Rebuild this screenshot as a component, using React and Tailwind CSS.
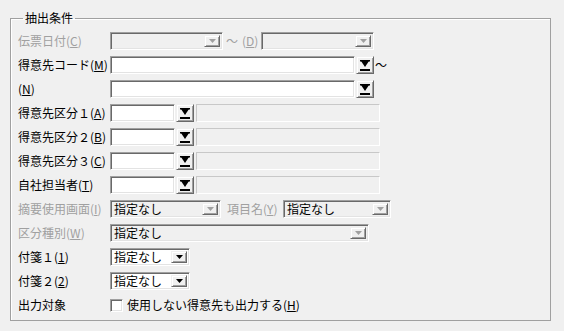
import React from 'react';

const sunken =
    'border border-t-[#a0a0a0] border-l-[#a0a0a0] border-r-white border-b-white shadow-[inset_1px_1px_0_#696969,inset_-1px_-1px_0_#e3e3e3]';
const raised =
    'border border-t-[#f0f0f0] border-l-[#f0f0f0] border-r-[#696969] border-b-[#696969] shadow-[inset_1px_1px_0_#ffffff,inset_-1px_-1px_0_#a0a0a0]';

const Mn = ({ text, k }) => (
    <>
        {text}(<u>{k}</u>)
    </>
);

const Row = ({ label, disabled, children }) => (
    <div className="flex h-[24px] items-center">
        <div className={`w-[92px] shrink-0 whitespace-nowrap ${disabled ? 'text-[#a0a0a0]' : 'text-black'}`}>{label}</div>
        {children}
    </div>
);

const Combo = ({ w, value, disabled }) => (
    <div className={`flex h-[18px] shrink-0 items-stretch p-[2px] ${disabled ? 'bg-[#f0f0f0]' : 'bg-white'} ${sunken} ${w}`}>
        <div className="flex flex-1 items-center whitespace-nowrap pl-[1px] text-[12px] leading-[16px] text-black">{value}</div>
        <div className={`flex w-[16px] items-center justify-center bg-[#f0f0f0] ${raised}`}>
            <svg width="7" height="4" viewBox="0 0 7 4">
                <polygon points="0,0 7,0 3.5,4" fill={disabled ? '#a0a0a0' : '#000'} />
            </svg>
        </div>
    </div>
);

const LookupButton = () => (
    <div className={`ml-[1px] flex h-[18px] w-[18px] shrink-0 items-center justify-center bg-[#f0f0f0] ${raised}`}>
        <svg width="10" height="11" viewBox="0 0 10 11">
            <rect x="0" y="0" width="10" height="1.5" fill="#000" />
            <polygon points="1,1 9,1 5,7" fill="#000" />
            <rect x="0" y="9" width="10" height="2" fill="#000" />
        </svg>
    </div>
);

const Input = ({ w }) => <div className={`h-[18px] shrink-0 bg-white ${sunken} ${w}`} />;

const NameBox = () => (
    <div className="ml-[2px] h-[18px] w-[184px] shrink-0 border border-t-[#c8c8c8] border-l-[#c8c8c8] border-r-white border-b-white bg-[#f0f0f0]" />
);

export default function App() {
    return (
        <div className="h-[331px] w-[564px] bg-[#f0f0f0] pt-[10px] font-['Noto_Sans_CJK_JP',sans-serif] text-[12px] leading-[16px] text-black">
            <fieldset className="mx-[10px] w-[541px] border border-[#a0a0a0] pl-[7px] pt-[3px] pb-[3px] shadow-[inset_1px_1px_0_#ffffff]">
                <legend className="ml-[5px] px-[2px] leading-[16px]">抽出条件</legend>

                <Row disabled label={<Mn text="伝票日付" k="C" />}>
                    <Combo w="w-[113px]" disabled />
                    <span className="ml-[3px] text-[#a0a0a0]">～</span>
                    <span className="ml-[4px] text-[#a0a0a0]">
                        (<u>D</u>)
                    </span>
                    <div className="ml-[3px]">
                        <Combo w="w-[113px]" disabled />
                    </div>
                </Row>

                <Row label={<Mn text="得意先コード" k="M" />}>
                    <Input w="w-[245px]" />
                    <LookupButton />
                    <span className="ml-[1px]">～</span>
                </Row>

                <Row label={<>(<u>N</u>)</>}>
                    <Input w="w-[245px]" />
                    <LookupButton />
                </Row>

                {[
                    ['得意先区分１', 'A'],
                    ['得意先区分２', 'B'],
                    ['得意先区分３', 'C'],
                    ['自社担当者', 'T'],
                ].map(([t, k]) => (
                    <Row key={t} label={<Mn text={t} k={k} />}>
                        <Input w="w-[65px]" />
                        <LookupButton />
                        <NameBox />
                    </Row>
                ))}

                <Row disabled label={<Mn text="摘要使用画面" k="I" />}>
                    <Combo w="w-[111px]" value="指定なし" disabled />
                    <span className="ml-[6px] w-[56px] text-[#a0a0a0]">
                        <Mn text="項目名" k="Y" />
                    </span>
                    <Combo w="w-[108px]" value="指定なし" disabled />
                </Row>

                <Row disabled label={<Mn text="区分種別" k="W" />}>
                    <Combo w="w-[259px]" value="指定なし" disabled />
                </Row>

                <Row label={<Mn text="付箋１" k="1" />}>
                    <Combo w="w-[80px]" value="指定なし" />
                </Row>

                <Row label={<Mn text="付箋２" k="2" />}>
                    <Combo w="w-[80px]" value="指定なし" />
                </Row>

                <Row label="出力対象">
                    <div className={`h-[13px] w-[13px] shrink-0 bg-white ${sunken}`} />
                    <span className="ml-[4px]">
                        使用しない得意先も出力する(<u>H</u>)
                    </span>
                </Row>
            </fieldset>
        </div>
    );
}
